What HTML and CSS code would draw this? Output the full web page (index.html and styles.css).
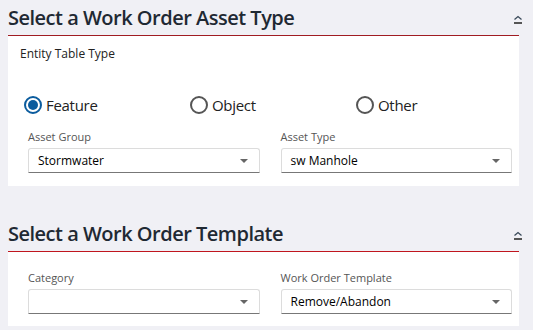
FILE: index.html
```html
<!DOCTYPE html>
<html>
    <head>
        <meta charset="UTF-8">
        <meta name="viewport" content="width=device-width, initial-scale=1.0">
        <link rel="stylesheet" href="styles.css">
    </head>
    <body>
        <section class="panel">
            <div class="panelHead">
                <h2>Select a Work Order Asset Type</h2>
                <button class="collapse" title="Collapse">
                    <svg width="10" height="10" viewBox="0 0 10 10">
                        <polyline points="1.5,4.5 5,1.5 8.5,4.5" fill="none" stroke="#3a4a5a" stroke-width="1.3"/>
                        <rect x="1" y="7" width="8" height="2" fill="#555"/>
                    </svg>
                </button>
            </div>
            <div class="panelBody assetBody">
                <div class="smallTitle">Entity Table Type</div>
                <div class="radioRow">
                    <label class="radio checked"><span class="dot"></span>Feature</label>
                    <label class="radio"><span class="dot"></span>Object</label>
                    <label class="radio"><span class="dot"></span>Other</label>
                </div>
                <div class="fieldRow">
                    <div class="field">
                        <div class="fieldLabel">Asset Group</div>
                        <div class="select">Stormwater<span class="caret"></span></div>
                    </div>
                    <div class="field">
                        <div class="fieldLabel">Asset Type</div>
                        <div class="select">sw Manhole<span class="caret"></span></div>
                    </div>
                </div>
            </div>
        </section>

        <section class="panel">
            <div class="panelHead second">
                <h2>Select a Work Order Template</h2>
                <button class="collapse" title="Collapse">
                    <svg width="10" height="10" viewBox="0 0 10 10">
                        <polyline points="1.5,4.5 5,1.5 8.5,4.5" fill="none" stroke="#3a4a5a" stroke-width="1.3"/>
                        <rect x="1" y="7" width="8" height="2" fill="#555"/>
                    </svg>
                </button>
            </div>
            <div class="panelBody templateBody">
                <div class="fieldRow">
                    <div class="field">
                        <div class="fieldLabel">Category</div>
                        <div class="select"><span class="caret"></span></div>
                    </div>
                    <div class="field">
                        <div class="fieldLabel">Work Order Template</div>
                        <div class="select">Remove/Abandon<span class="caret"></span></div>
                    </div>
                </div>
            </div>
        </section>
    </body>
</html>
```

FILE: styles.css
```css
body {
    margin: 0;
    padding: 0 14px 0 8px;
    background-color: #f0f0f5;
    font-family: "Open Sans", Arial, sans-serif;
    color: #222;
}

.panelHead {
    display: flex;
    align-items: center;
    justify-content: space-between;
    height: 35px;
    border-bottom: 1px solid #a01c22;
}
.panelHead.second {
    margin-top: 30px;
    border-bottom-color: #c0161e;
}
.panelHead h2 {
    margin: 0;
    font-size: 20px;
    font-weight: 600;
    letter-spacing: -0.5px;
    color: #1f2933;
}
.collapse {
    border: none;
    background: none;
    padding: 0;
    margin-right: -4px;
    width: 10px;
    height: 10px;
    cursor: pointer;
}

.panelBody {
    background-color: white;
}
.assetBody {
    padding: 10px 7px 13px 12px;
}
.templateBody {
    padding: 18px 7px 12px 12px;
}

.smallTitle {
    font-size: 12px;
    line-height: 16px;
}

.radioRow {
    display: grid;
    grid-template-columns: repeat(3, 166px);
    padding-left: 4px;
    margin-top: 33px;
    height: 20px;
}
.radio {
    display: flex;
    align-items: center;
    font-size: 15px;
    letter-spacing: -0.3px;
    color: #222;
}
.dot {
    width: 14px;
    height: 14px;
    border: 2px solid #555;
    border-radius: 50%;
    margin-right: 4px;
    position: relative;
}
.radio.checked .dot {
    border-color: #0b5c9e;
}
.radio.checked .dot::after {
    content: "";
    position: absolute;
    left: 2px;
    top: 2px;
    width: 10px;
    height: 10px;
    border-radius: 50%;
    background-color: #0b5c9e;
}

.fieldRow {
    display: grid;
    grid-template-columns: 1fr 1fr;
    column-gap: 21px;
    padding-left: 8px;
}
.assetBody .fieldRow {
    margin-top: 14px;
}
.fieldLabel {
    font-size: 11px;
    line-height: 15px;
    color: #555;
    margin-bottom: 4px;
}
.select {
    position: relative;
    height: 23px;
    line-height: 23px;
    padding-left: 9px;
    font-size: 12px;
    font-weight: 400;
    color: #000;
    border: 1px solid #dcdcdc;
    border-bottom-color: #777;
    border-radius: 3px 3px 0 0;
}
.caret {
    position: absolute;
    right: 11px;
    top: 10px;
    border-left: 4px solid transparent;
    border-right: 4px solid transparent;
    border-top: 4px solid #666;
}
```
